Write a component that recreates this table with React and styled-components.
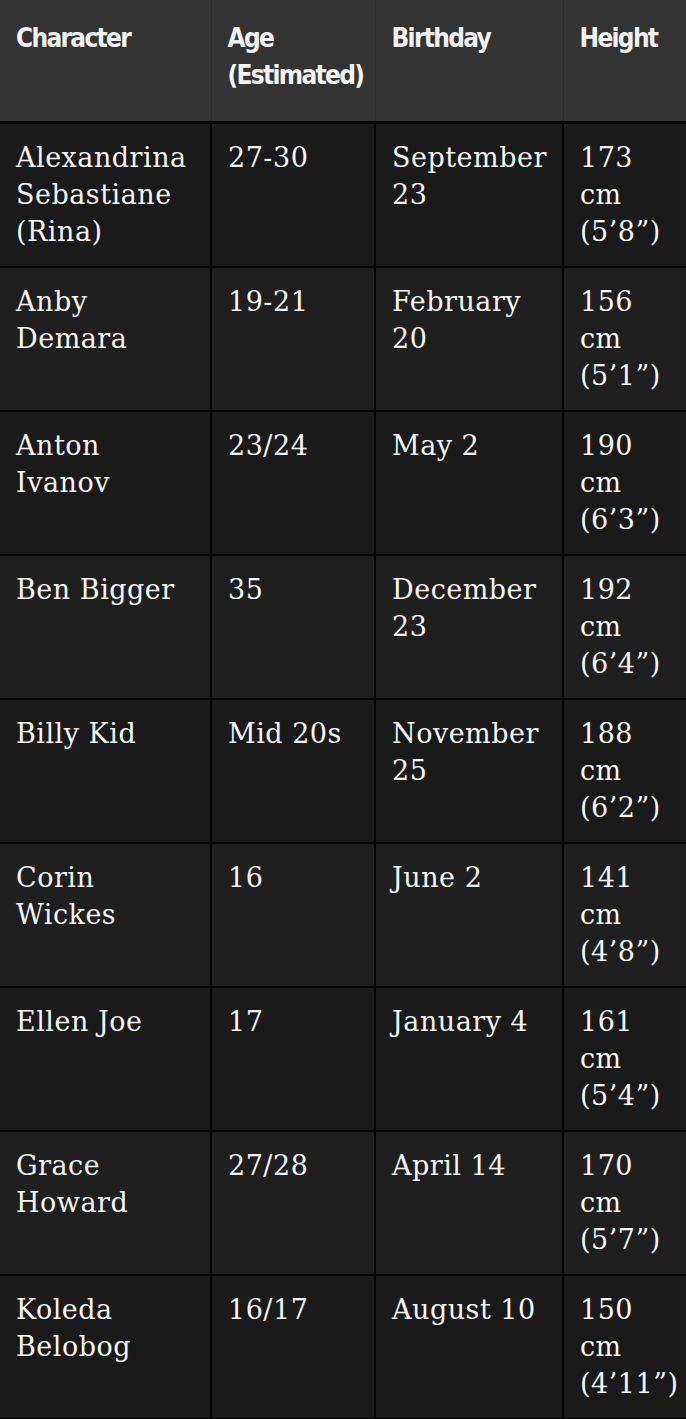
import React from "react";
import styled, { createGlobalStyle } from "styled-components";

const GlobalStyle = createGlobalStyle`
  html, body {
    margin: 0;
    padding: 0;
    background: #1a1a1a;
  }
`;

const Table = styled.table`
  width: 686px;
  border-collapse: collapse;
  table-layout: fixed;
  background: #1a1a1a;
`;

const Col = styled.col`
  width: ${(p) => p.$w}px;
`;

const HeadCell = styled.th`
  background: #333333;
  color: #f2f2f2;
  font-family: "DejaVu Sans Condensed", "DejaVu Sans", sans-serif;
  font-stretch: condensed;
  font-weight: 700;
  font-size: 26px;
  line-height: 37px;
  letter-spacing: -1.7px;
  text-align: left;
  vertical-align: top;
  padding: 20px 16px 27px;
  border-left: 1px solid #2b2b2b;
  border-bottom: 3px solid #000;
  &:first-child {
    border-left: none;
  }
`;

const Row = styled.tr`
  background: ${(p) => (p.$alt ? "#1f1f1f" : "#1a1a1a")};
`;

const Cell = styled.td`
  color: #f5f5f5;
  font-family: "DejaVu Serif", "Liberation Serif", serif;
  font-size: 27px;
  line-height: 37px;
  letter-spacing: 0.5px;
  vertical-align: top;
  padding: 15px 16px 16px;
  border: 2px solid #000;
  border-top: none;
  &:first-child {
    border-left: none;
  }
  &:last-child {
    border-right: none;
    padding-right: 4px;
  }
`;

const columns = [
  { title: "Character", width: 211 },
  { title: "Age (Estimated)", width: 164 },
  { title: "Birthday", width: 188 },
  { title: "Height", width: 123 },
];

const rows = [
  ["Alexandrina Sebastiane (Rina)", "27-30", "September 23", "173 cm (5’8”)"],
  ["Anby Demara", "19-21", "February 20", "156 cm (5’1”)"],
  ["Anton Ivanov", "23/24", "May 2", "190 cm (6’3”)"],
  ["Ben Bigger", "35", "December 23", "192 cm (6’4”)"],
  ["Billy Kid", "Mid 20s", "November 25", "188 cm (6’2”)"],
  ["Corin Wickes", "16", "June 2", "141 cm (4’8”)"],
  ["Ellen Joe", "17", "January 4", "161 cm (5’4”)"],
  ["Grace Howard", "27/28", "April 14", "170 cm (5’7”)"],
  ["Koleda Belobog", "16/17", "August 10", "150 cm (4’11”)"],
];

export default function App() {
  return (
    <>
      <GlobalStyle />
      <Table>
        <colgroup>
          {columns.map((c) => (
            <Col key={c.title} $w={c.width} />
          ))}
        </colgroup>
        <thead>
          <tr>
            {columns.map((c) => (
              <HeadCell key={c.title}>{c.title}</HeadCell>
            ))}
          </tr>
        </thead>
        <tbody>
          {rows.map((r, i) => (
            <Row key={r[0]} $alt={i % 2 === 1}>
              {r.map((c, j) => (
                <Cell key={j}>{c}</Cell>
              ))}
            </Row>
          ))}
        </tbody>
      </Table>
    </>
  );
}
